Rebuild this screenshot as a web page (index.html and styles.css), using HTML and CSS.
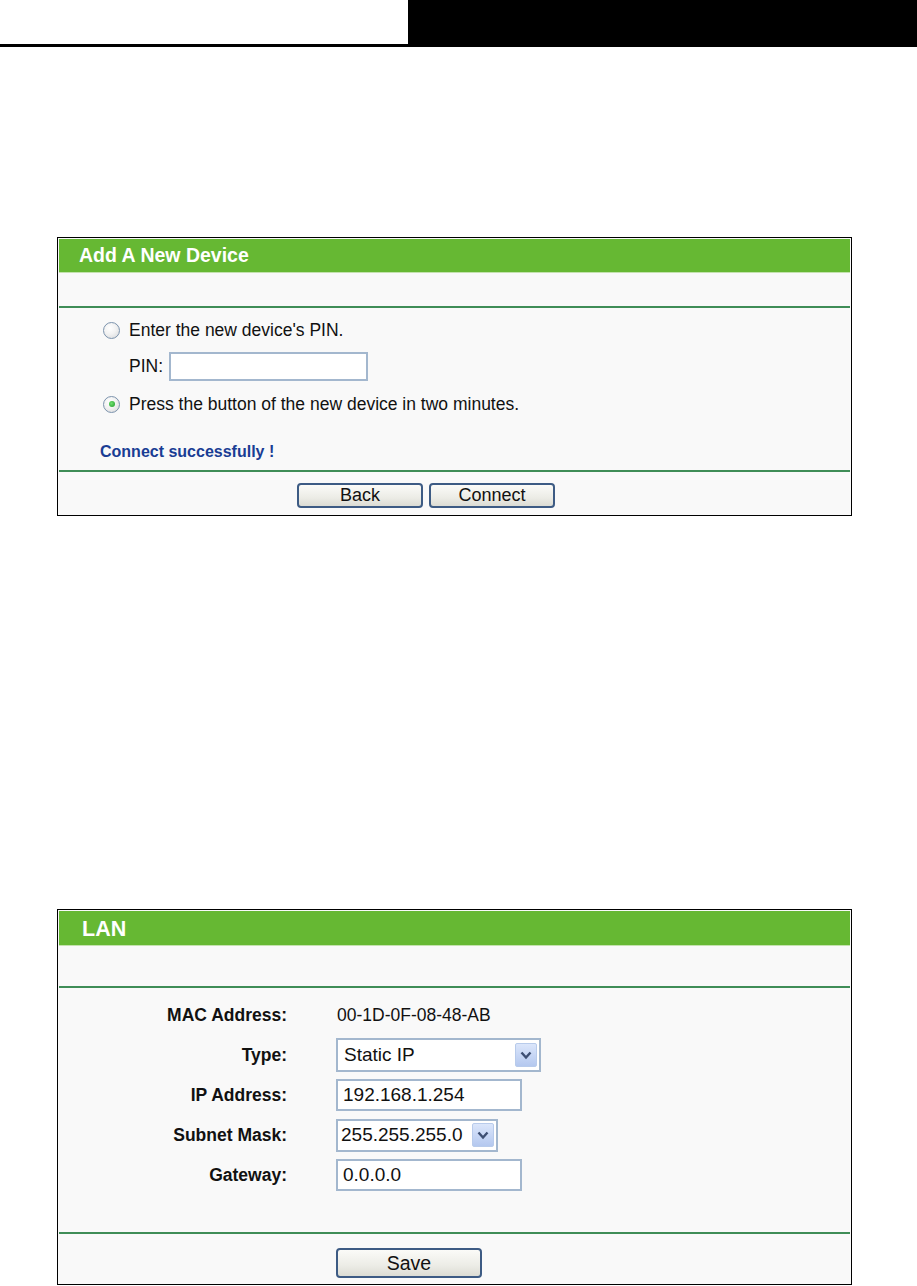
FILE: index.html
```
<!DOCTYPE html>
<html lang="en">
<head>
    <meta charset="UTF-8">
    <title>Add A New Device / LAN</title>
    <link rel="stylesheet" href="styles.css">
</head>
<body>
    <div class="topbar">
        <div class="topbar-left"></div>
        <div class="topbar-right"></div>
    </div>

    <!-- WPS: add device -->
    <div class="panel panel-wps">
        <h2 class="panel-title">Add A New Device</h2>
        <div class="panel-blank"></div>
        <div class="panel-body wps-body">
            <div class="radio-row">
                <span class="radio"></span>
                <span>Enter the new device's PIN.</span>
            </div>
            <div class="pin-row">
                <span>PIN:</span>
                <input type="text" class="field pin-input">
            </div>
            <div class="radio-row second">
                <span class="radio checked"></span>
                <span>Press the button of the new device in two minutes.</span>
            </div>
            <div class="status">Connect successfully !</div>
        </div>
        <div class="panel-foot wps-foot">
            <button class="btn">Back</button>
            <button class="btn">Connect</button>
        </div>
    </div>

    <!-- LAN settings -->
    <div class="panel panel-lan">
        <h2 class="panel-title lan-title">LAN</h2>
        <div class="panel-blank lan-blank"></div>
        <div class="panel-body lan-body">
            <div class="form-row">
                <label>MAC Address:</label>
                <span class="value">00-1D-0F-08-48-AB</span>
            </div>
            <div class="form-row">
                <label>Type:</label>
                <div class="select select-type">
                    <span>Static IP</span>
                    <span class="arrow">
                        <svg width="12" height="9" viewBox="0 0 12 9"><path d="M1.5 1.5 L6 6.5 L10.5 1.5" fill="none" stroke="#3d4f73" stroke-width="2.4"/></svg>
                    </span>
                </div>
            </div>
            <div class="form-row">
                <label>IP Address:</label>
                <input type="text" class="field ip-input" value="192.168.1.254">
            </div>
            <div class="form-row">
                <label>Subnet Mask:</label>
                <div class="select select-mask">
                    <span>255.255.255.0</span>
                    <span class="arrow">
                        <svg width="12" height="9" viewBox="0 0 12 9"><path d="M1.5 1.5 L6 6.5 L10.5 1.5" fill="none" stroke="#3d4f73" stroke-width="2.4"/></svg>
                    </span>
                </div>
            </div>
            <div class="form-row">
                <label>Gateway:</label>
                <input type="text" class="field ip-input" value="0.0.0.0">
            </div>
        </div>
        <div class="panel-foot lan-foot">
            <button class="btn btn-save">Save</button>
        </div>
    </div>
</body>
</html>
```

FILE: styles.css
```
:root {
    --green: #66b833;
    --line: #3f8d57;
    --panel-bg: #f9f9f9;
    --field-border: #a3b7ce;
    --btn-border: #3d5b84;
    --status: #1a3d94;
}
body {
    margin: 0;
    background: #fff;
    font-family: "Liberation Sans", Arial, sans-serif;
    font-size: 17.5px;
    color: #111;
}
.topbar {
    display: flex;
    height: 47px;
}
.topbar-left {
    flex: 0 0 408px;
    border-bottom: 3px solid #000;
    box-sizing: border-box;
}
.topbar-right {
    flex: 1;
    background: #000;
}
.panel {
    width: 795px;
    box-sizing: border-box;
    margin-left: 57px;
    border: 1px solid #000;
    background: var(--panel-bg);
    padding: 1px 1px 0 1px;
}
.panel-wps {
    margin-top: 190px;
}
.panel-lan {
    margin-top: 393px;
}
.panel-title {
    margin: 0;
    height: 33px;
    line-height: 33px;
    padding-left: 20px;
    background: var(--green);
    border-bottom: 1px solid #c4e2ae;
    color: #fff;
    font-size: 19.5px;
    font-weight: bold;
}
.lan-title {
    height: 34px;
    line-height: 36px;
    padding-left: 23px;
    font-size: 21.5px;
}
.panel-blank {
    height: 33px;
    border-bottom: 2px solid var(--line);
}
.lan-blank {
    height: 40px;
}
.panel-foot {
    border-top: 2px solid var(--line);
    display: flex;
}

/* wps panel */
.wps-body {
    padding: 10px 0 0 44px;
    height: 162px;
    box-sizing: border-box;
}
.radio-row {
    display: flex;
    align-items: center;
    height: 24px;
    gap: 9px;
}
.radio-row.second {
    margin-top: 11px;
}
.radio {
    width: 15px;
    height: 15px;
    border-radius: 50%;
    border: 1px solid #7c93ad;
    background: radial-gradient(circle at 40% 35%, #fff 0%, #f2f2f2 45%, #d4d6d8 100%);
    display: flex;
    align-items: center;
    justify-content: center;
}
.radio.checked::after {
    content: "";
    width: 6px;
    height: 6px;
    border-radius: 50%;
    background: radial-gradient(circle at 40% 40%, #6fe06f, #1f9a2a);
}
.pin-row {
    display: flex;
    align-items: center;
    gap: 6px;
    margin: 10px 0 0 26px;
}
.field {
    font-family: inherit;
    font-size: 19px;
    color: #111;
    background: #fff;
    border: 2px solid var(--field-border);
    box-sizing: border-box;
    padding: 0 5px;
    outline: none;
}
.pin-input {
    width: 199px;
    height: 29px;
}
.status {
    margin: 27px 0 0 -3px;
    font-size: 16px;
    font-weight: bold;
    color: var(--status);
}
.wps-foot {
    padding: 11px 0 7px 238px;
    gap: 6px;
}
.btn {
    font-family: inherit;
    font-size: 18px;
    color: #111;
    width: 126px;
    height: 25px;
    padding: 0;
    border: 2px solid var(--btn-border);
    border-radius: 4px;
    background: linear-gradient(#fbfbf8, #ecece6 60%, #dcdcd4);
    cursor: pointer;
}

/* lan panel */
.lan-body {
    padding: 7px 0 37px 0;
}
.form-row {
    display: flex;
    align-items: center;
    height: 40px;
}
.form-row label {
    flex: 0 0 228px;
    text-align: right;
    font-weight: bold;
    margin-right: 49px;
}
.value {
    margin-left: 1px;
}
.select {
    display: flex;
    align-items: center;
    justify-content: space-between;
    height: 34px;
    box-sizing: border-box;
    border: 2px solid var(--field-border);
    background: #fff;
    padding: 0 2px 0 6px;
    font-size: 19px;
}
.select-type {
    width: 205px;
}
.select-mask {
    width: 162px;
    height: 33px;
    padding-left: 3px;
}
.arrow {
    width: 22px;
    height: 24px;
    box-sizing: border-box;
    border: 1px solid #b8cbeb;
    border-radius: 2px;
    background: linear-gradient(#dbe6fb, #b4c8ef);
    display: flex;
    align-items: center;
    justify-content: center;
}
.ip-input {
    width: 186px;
    height: 32px;
}
.lan-foot {
    padding: 14px 0 6px 277px;
}
.btn-save {
    width: 146px;
    height: 30px;
    font-size: 19.5px;
}
```
